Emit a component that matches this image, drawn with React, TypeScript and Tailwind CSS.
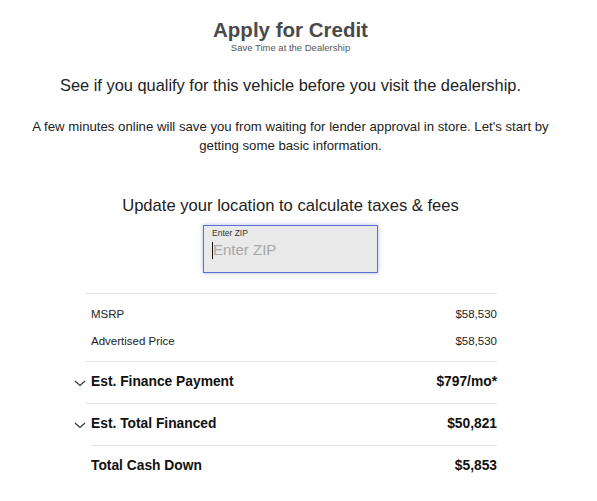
import React from "react";

function Chevron() {
  return (
    <svg
      width="12"
      height="8"
      viewBox="0 0 12 8"
      fill="none"
      stroke="#333"
      strokeWidth="1.1"
      className="absolute left-[-11px] top-1/2 -translate-y-1/2"
    >
      <path d="M1 2 L6 6.5 L11 2" />
    </svg>
  );
}

function PriceRow({ label, value }: { label: string; value: string }) {
  return (
    <div className="flex justify-between items-center h-[27px] pl-[6px] text-[11.5px] text-[#222]">
      <span>{label}</span>
      <span>{value}</span>
    </div>
  );
}

function BoldRow({
  label,
  value,
  chevron,
}: {
  label: string;
  value: string;
  chevron?: boolean;
}) {
  return (
    <div className="relative flex justify-between items-center h-[41px] pl-[6px] text-[13.8px] font-bold text-[#111]">
      {chevron && <Chevron />}
      <span>{label}</span>
      <span>{value}</span>
    </div>
  );
}

export default function App() {
  return (
    <div
      className="w-[581px] bg-white pt-[18px] flex flex-col items-center text-[#222]"
      style={{ fontFamily: '"Liberation Sans", Arial, sans-serif' }}
    >
      <h1 className="text-[20.5px] leading-[24px] font-bold text-[#4a4a4a]">
        Apply for Credit
      </h1>
      <p className="text-[9.5px] leading-[12px] text-[#555]">
        Save Time at the Dealership
      </p>
      <p className="mt-[21px] text-[16.4px] leading-[20px] text-[#222]">
        See if you qualify for this vehicle before you visit the dealership.
      </p>
      <p className="mt-[22px] text-[13.2px] leading-[19px] text-center text-[#222] px-[24px]">
        A few minutes online will save you from waiting for lender approval in
        store. Let's start by getting some basic information.
      </p>
      <p className="mt-[41px] text-[16.6px] leading-[20px] text-[#222]">
        Update your location to calculate taxes &amp; fees
      </p>
      <div className="mt-[9px] w-[175px] h-[48px] border border-[#5a6fd0] bg-[#e9e9e9] shadow-[0_0_4px_rgba(90,111,208,0.5)] px-[8px] pt-[2px]">
        <div className="text-[8.5px] leading-[10px] text-[#333]">Enter ZIP</div>
        <div className="flex items-center mt-[3px]">
          <span className="w-[1px] h-[17px] bg-[#111]" />
          <span className="text-[15px] leading-[18px] text-[#a8a8a8]">
            Enter ZIP
          </span>
        </div>
      </div>
      <div className="mt-[20px] w-[412px] border-t border-[#e3e3e3] ml-[1px]">
        <div className="py-[6px] pt-[7px]">
          <PriceRow label="MSRP" value="$58,530" />
          <PriceRow label="Advertised Price" value="$58,530" />
        </div>
        <div className="border-t border-[#e3e3e3]">
          <BoldRow label="Est. Finance Payment" value="$797/mo*" chevron />
        </div>
        <div className="border-t border-[#e3e3e3]">
          <BoldRow label="Est. Total Financed" value="$50,821" chevron />
        </div>
        <div className="ml-[7px] border-t border-[#e3e3e3]">
          <div className="-ml-[7px]">
            <BoldRow label="Total Cash Down" value="$5,853" />
          </div>
        </div>
      </div>
    </div>
  );
}
